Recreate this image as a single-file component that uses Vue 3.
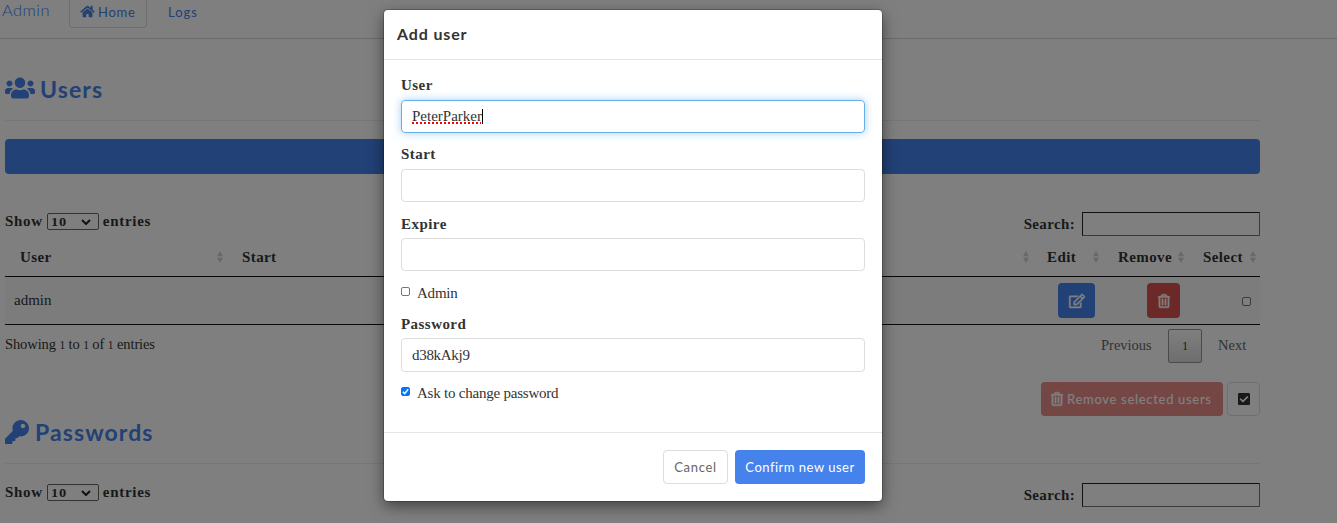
<script setup>
import { ref } from 'vue'

const icons = {
  users: { box: '0 0 640 512', d: 'M96 224c35.3 0 64-28.7 64-64s-28.7-64-64-64-64 28.7-64 64 28.7 64 64 64zm448 0c35.3 0 64-28.7 64-64s-28.7-64-64-64-64 28.7-64 64 28.7 64 64 64zm32 32h-64c-17.6 0-33.5 7.1-45.1 18.6 40.3 22.1 68.9 62 75.1 109.4h66c17.7 0 32-14.3 32-32v-32c0-35.3-28.7-64-64-64zm-256 0c61.9 0 112-50.1 112-112S381.9 32 320 32 208 82.1 208 144s50.1 112 112 112zm76.8 32h-8.3c-20.8 10-43.9 16-68.5 16s-47.6-6-68.5-16h-8.3C179.6 288 128 339.6 128 403.2V432c0 26.5 21.5 48 48 48h288c26.5 0 48-21.5 48-48v-28.8c0-63.6-51.6-115.2-115.2-115.2zm-223.7-13.4C161.5 263.1 145.6 256 128 256H64c-35.3 0-64 28.7-64 64v32c0 17.7 14.3 32 32 32h65.9c6.3-47.4 34.9-87.3 75.2-109.4z' },
  key: { box: '0 0 512 512', d: 'M512 176.001C512 273.203 433.202 352 336 352c-11.22 0-22.19-1.062-32.827-3.069l-24.012 27.014A23.999 23.999 0 0 1 261.223 384H224v40c0 13.255-10.745 24-24 24h-40v40c0 13.255-10.745 24-24 24H24c-13.255 0-24-10.745-24-24v-78.059c0-6.365 2.529-12.47 7.029-16.971l161.802-161.802C163.108 213.814 160 195.271 160 176 160 78.798 238.797.001 335.999 0 433.488-.001 512 78.511 512 176.001zM336 128c0 26.51 21.49 48 48 48s48-21.49 48-48-21.49-48-48-48-48 21.49-48 48z' },
  home: { box: '0 0 576 512', d: 'M280.37 148.26L96 300.11V464a16 16 0 0 0 16 16l112.06-.29a16 16 0 0 0 15.92-16V368a16 16 0 0 1 16-16h64a16 16 0 0 1 16 16v95.64a16 16 0 0 0 16 16.05L464 480a16 16 0 0 0 16-16V300L295.67 148.26a12.19 12.19 0 0 0-15.3 0zM571.6 251.47L488 182.56V44.05a12 12 0 0 0-12-12h-56a12 12 0 0 0-12 12v72.61L318.47 43a48 48 0 0 0-61 0L4.34 251.47a12 12 0 0 0-1.6 16.9l25.5 31A12 12 0 0 0 45.15 301l235.22-193.74a12.19 12.19 0 0 1 15.3 0L530.9 301a12 12 0 0 0 16.9-1.6l25.5-31a12 12 0 0 0-1.7-16.93z' },
  edit: { box: '0 0 576 512', d: 'M402.3 344.9l32-32c5-5 13.7-1.5 13.7 5.7V464c0 26.5-21.5 48-48 48H48c-26.5 0-48-21.5-48-48V112c0-26.5 21.5-48 48-48h273.5c7.1 0 10.7 8.6 5.7 13.7l-32 32c-1.5 1.5-3.5 2.3-5.7 2.3H48v352h352V350.5c0-2.1.8-4.1 2.3-5.6zm156.6-201.8L296.3 405.7l-90.4 10c-26.2 2.9-48.5-19.2-45.6-45.6l10-90.4L432.9 17.1c22.9-22.9 59.9-22.9 82.7 0l43.2 43.2c22.9 22.9 22.9 60 .1 82.8zM460.1 174L402 115.9 216.2 301.8l-7.3 65.3 65.3-7.3L460.1 174zm64.8-79.7l-43.2-43.2c-4.1-4.1-10.8-4.1-14.8 0L436 82l58.1 58.1 30.9-30.9c4-4.2 4-10.8-.1-14.9z' },
  trash: { box: '0 0 448 512', d: 'M268 416h24a12 12 0 0 0 12-12V188a12 12 0 0 0-12-12h-24a12 12 0 0 0-12 12v216a12 12 0 0 0 12 12zM432 80h-82.41l-34-56.7A48 48 0 0 0 274.41 0H173.59a48 48 0 0 0-41.16 23.3L98.41 80H16A16 16 0 0 0 0 96v16a16 16 0 0 0 16 16h16v336a48 48 0 0 0 48 48h288a48 48 0 0 0 48-48V128h16a16 16 0 0 0 16-16V96a16 16 0 0 0-16-16zM171.84 50.91A6 6 0 0 1 177 48h94a6 6 0 0 1 5.15 2.91L293.61 80H154.39zM368 464H80V128h288zm-212-48h24a12 12 0 0 0 12-12V188a12 12 0 0 0-12-12h-24a12 12 0 0 0-12 12v216a12 12 0 0 0 12 12z' },
  check: { box: '0 0 448 512', d: 'M400 480H48c-26.51 0-48-21.49-48-48V80c0-26.51 21.49-48 48-48h352c26.51 0 48 21.49 48 48v352c0 26.51-21.49 48-48 48zm-204.686-98.059l184-184c6.248-6.248 6.248-16.379 0-22.627l-22.627-22.627c-6.248-6.248-16.379-6.249-22.628 0L184 302.745l-70.059-70.059c-6.248-6.248-16.379-6.248-22.628 0l-22.627 22.627c-6.248 6.248-6.248 16.379 0 22.627l104 104c6.249 6.25 16.379 6.25 22.628.001z' }
}
const columns = ['User', 'Start', 'Edit', 'Remove', 'Select']
const user = ref('PeterParker')
const password = ref('d38kAkj9')
</script>

<template>
  <div class="screen">
    <div class="page">
      <nav class="nav">
        <span class="brand">Admin</span>
        <span class="tab"><svg class="i-home" :viewBox="icons.home.box"><path :d="icons.home.d" /></svg>Home</span>
        <span class="link">Logs</span>
      </nav>
      <main class="content">
        <h2 class="title first"><svg class="i-users" :viewBox="icons.users.box"><path :d="icons.users.d" /></svg><span class="users-title">Users</span></h2>
        <div class="bar"></div>
        <div class="controls">
          <div class="length">Show <span class="select"><span>10</span><svg viewBox="0 0 10 6"><path d="M1 1l4 4 4-4" /></svg></span> entries</div>
          <div class="search">Search: <span class="box"></span></div>
        </div>
        <div class="grid head">
          <div v-for="c in columns" :key="c" class="th">
            <span>{{ c }}</span>
            <svg class="sort" viewBox="0 0 6 12"><path d="M0 5.3L3 0l3 5.3zM0 6.7h6L3 12z" /></svg>
          </div>
        </div>
        <div class="grid row">
          <div class="name">admin</div>
          <div></div>
          <div class="c-edit"><span class="btn edit"><svg :viewBox="icons.edit.box"><path :d="icons.edit.d" /></svg></span></div>
          <div class="c-remove"><span class="btn remove"><svg :viewBox="icons.trash.box"><path :d="icons.trash.d" /></svg></span></div>
          <div class="c-select"><span class="check"></span></div>
        </div>
        <div class="foot">
          <span class="info">Showing <i>1</i> to <i>1</i> of <i>1</i> entries</span>
          <span class="prev">Previous</span><span class="current">1</span><span class="next">Next</span>
        </div>
        <div class="actions">
          <span class="bulk"><svg :viewBox="icons.trash.box"><path :d="icons.trash.d" /></svg><span>Remove selected users</span></span>
          <span class="all"><svg :viewBox="icons.check.box"><path :d="icons.check.d" /></svg></span>
        </div>
        <h2 class="title second"><svg class="i-key" :viewBox="icons.key.box"><path :d="icons.key.d" /></svg><span class="pass-title">Passwords</span></h2>
        <div class="controls again">
          <div class="length">Show <span class="select"><span>10</span><svg viewBox="0 0 10 6"><path d="M1 1l4 4 4-4" /></svg></span> entries</div>
          <div class="search">Search: <span class="box"></span></div>
        </div>
      </main>
    </div>
    <div class="overlay">
      <section class="modal">
        <header class="m-head">Add user</header>
        <div class="m-body">
          <label class="lab">User</label>
          <div class="field focus"><span class="typed">{{ user }}</span><span class="caret"></span></div>
          <label class="lab">Start</label>
          <div class="field"></div>
          <label class="lab expire">Expire</label>
          <div class="field"></div>
          <div class="opt"><span class="check"></span><span class="o-text">Admin</span></div>
          <label class="lab pw">Password</label>
          <div class="field tall"><span class="pass">{{ password }}</span></div>
          <div class="opt"><span class="check on"><svg viewBox="0 0 9 9"><path d="M1.8 4.7l1.9 1.9 3.5-4.4" /></svg></span><span class="o-text">Ask to change password</span></div>
        </div>
        <footer class="m-foot">
          <span class="cancel">Cancel</span>
          <span class="confirm">Confirm new user</span>
        </footer>
      </section>
    </div>
  </div>
</template>

<style>
body { background: #fff; overflow: hidden; }
</style>

<style scoped>
* { box-sizing: border-box; }
.screen { position: relative; width: 1337px; height: 523px; overflow: hidden; background: #fff; color: #333; font: 15px/20px "Liberation Serif", serif; white-space: nowrap; }
.page { height: 523px; overflow: hidden; }
svg { fill: currentColor; display: block; flex: none; }
.nav { height: 39px; border-bottom: 1px solid #d5d5d5; display: flex; align-items: flex-start; font-family: Lato, sans-serif; color: #4582ec; }
.brand { width: 69px; padding-left: 2px; font-size: 16.5px; font-weight: 300; line-height: 20px; letter-spacing: .45px; }
.tab { width: 78px; height: 28px; padding: 0 0 4px 10px; border: 1px solid #ddd; border-top: 0; border-radius: 0 0 4px 4px; display: flex; align-items: center; font-size: 13px; letter-spacing: .7px; }
.i-home { width: 15px; height: 13px; margin-right: 3px; }
.link { margin-left: 21px; font-size: 13px; line-height: 24px; letter-spacing: 1px; }
.content { width: 1255px; margin-left: 5px; }
.title { margin: 0; border-bottom: 1px solid #eee; display: flex; align-items: flex-start; font: 700 23px/30px Lato, sans-serif; color: #4582ec; }
.first { height: 82px; padding-top: 35px; }
.second { height: 48px; padding-top: 1px; }
.i-users { width: 30px; height: 24px; margin: 2px 5px 0 0; }
.i-key { width: 24px; height: 24px; margin: 3px 6px 0 0; }
.users-title { letter-spacing: 1.1px; }
.pass-title { letter-spacing: 1.1px; }
.bar { height: 35px; margin-top: 18px; border-radius: 4px; background: #4582ec; }
.controls { margin-top: 38px; height: 24px; display: flex; justify-content: space-between; font-weight: 700; letter-spacing: .35px; }
.again { margin-top: 19px; }
.length { display: flex; align-items: center; gap: 4px; height: 18px; letter-spacing: .7px; }
.select { width: 52px; height: 17px; margin-top: 1px; border: 1px solid #666; border-radius: 2px; padding: 0 7px 0 3px; display: flex; align-items: center; justify-content: space-between; font-size: 12px; }
.select span { transform: scaleX(1.2); transform-origin: left; }
.select svg { width: 10px; height: 6px; fill: none; stroke: #222; stroke-width: 2; }
.search { display: flex; align-items: center; gap: 7px; line-height: 22px; padding-bottom: 0; }
.box { width: 178px; height: 24px; border: 1px solid; border-color: #222 #767676 #767676 #222; }
.grid { display: grid; grid-template-columns: 222px 806px 70px 85px 72px; }
.head { height: 41px; border-bottom: 1px solid #111; font-weight: 700; letter-spacing: .4px; }
.th { display: flex; align-items: center; justify-content: space-between; padding: 2px 4px 0 15px; }
.th:nth-child(3) { padding-left: 14px; }
.sort { width: 6px; height: 12px; color: #d0d0d0; }
.row { height: 48px; align-items: center; background: #f9f9f9; border-bottom: 1px solid #111; }
.name { padding: 0 0 2px 9px; }
.c-edit { padding-left: 25px; }
.c-remove { padding-left: 44px; }
.c-select { padding: 2px 0 0 54px; }
.btn { height: 35px; border-radius: 4px; display: flex; align-items: center; justify-content: center; color: #fff; }
.btn path, .bulk path { stroke: currentColor; stroke-width: 18; }
.edit { width: 37px; background: #4582ec; }
.edit svg { width: 16px; height: 14px; overflow: visible; }
.remove { width: 33px; background: #d9534f; }
.btn.remove svg { width: 12px; height: 14px; overflow: visible; }
.check { display: block; flex: none; width: 9px; height: 9px; border: 1px solid #767676; border-radius: 2px; background: #fff; }
.foot { height: 34px; margin-top: 4px; display: flex; align-items: center; font-size: 14.5px; }
.info { width: 1096px; padding-bottom: 3px; letter-spacing: -.1px; }
.info i { font-style: normal; font-size: 11.5px; }
.prev { width: 67px; padding-bottom: 2px; color: #666; }
.current { width: 34px; height: 34px; border: 1px solid #979797; border-radius: 2px; background: linear-gradient(#fff, #dcdcdc); text-align: center; line-height: 33px; font-size: 11.5px; }
.next { margin-left: 16px; padding-bottom: 2px; color: #666; }
.actions { margin-top: 19px; height: 34px; display: flex; justify-content: flex-end; gap: 4px; }
.bulk { width: 182px; border-radius: 4px; background: #e88e8b; color: #fff; display: flex; align-items: center; padding-left: 10px; gap: 4px; font: 500 13px/20px Lato, sans-serif; letter-spacing: .68px; }
.bulk svg { width: 12px; height: 14px; overflow: visible; }
.all { width: 33px; border: 1px solid #ddd; border-radius: 4px; display: flex; align-items: center; justify-content: center; }
.all svg { width: 12px; height: 14px; }
.overlay { position: absolute; inset: 0; background: rgba(0, 0, 0, .5); padding: 10px 0 0 384px; }
.modal { width: 498px; height: 491px; border-radius: 4px; background: #fff; box-shadow: 0 0 0 1px rgba(0, 0, 0, .2), 0 5px 15px rgba(0, 0, 0, .5); display: flex; flex-direction: column; }
.m-head { height: 50px; border-bottom: 1px solid #e5e5e5; padding-left: 13px; font: 700 16px/48px Lato, sans-serif; letter-spacing: .85px; }
.m-body { height: 372px; padding: 15px 17px 0; }
.lab { display: block; height: 20px; margin-bottom: 5px; font-weight: 700; letter-spacing: .45px; }
.field { height: 33px; margin-bottom: 11px; border: 1px solid #ddd; border-radius: 4px; padding: 0 10px 1px; display: flex; align-items: center; }
.focus { border-color: #66afe9; box-shadow: 0 0 8px rgba(102, 175, 233, .6); }
.expire { margin-top: 12px; margin-bottom: 4px; }
.typed { text-decoration: underline dotted #f00 1.5px; text-underline-offset: 1px; text-decoration-skip-ink: none; }
.caret { width: 1px; height: 15px; background: #000; }
.opt { height: 21px; display: flex; align-items: flex-start; }
.opt .check { margin: 5px 7px 0 0; }
.o-text { padding-top: 1px; letter-spacing: -.22px; }
.opt .on { border-color: #0075ff; background: #0075ff; }
.on svg { width: 9px; height: 9px; margin: -1px; fill: none; stroke: #fff; stroke-width: 1.5; }
.pw { margin-top: 11px; margin-bottom: 4px; }
.pass { letter-spacing: -.3px; }
.tall { height: 34px; margin-bottom: 10px; }
.m-foot { height: 69px; border-top: 1px solid #e5e5e5; padding: 17px 17px 0; display: flex; justify-content: flex-end; gap: 7px; font: 13px/34px Lato, sans-serif; }
.cancel, .confirm { height: 34px; border-radius: 4px; text-align: center; letter-spacing: .5px; }
.cancel { width: 65px; border: 1px solid #ddd; line-height: 32px; color: #666; letter-spacing: .7px; }
.confirm { width: 130px; background: #4582ec; color: #fff; }
</style>
